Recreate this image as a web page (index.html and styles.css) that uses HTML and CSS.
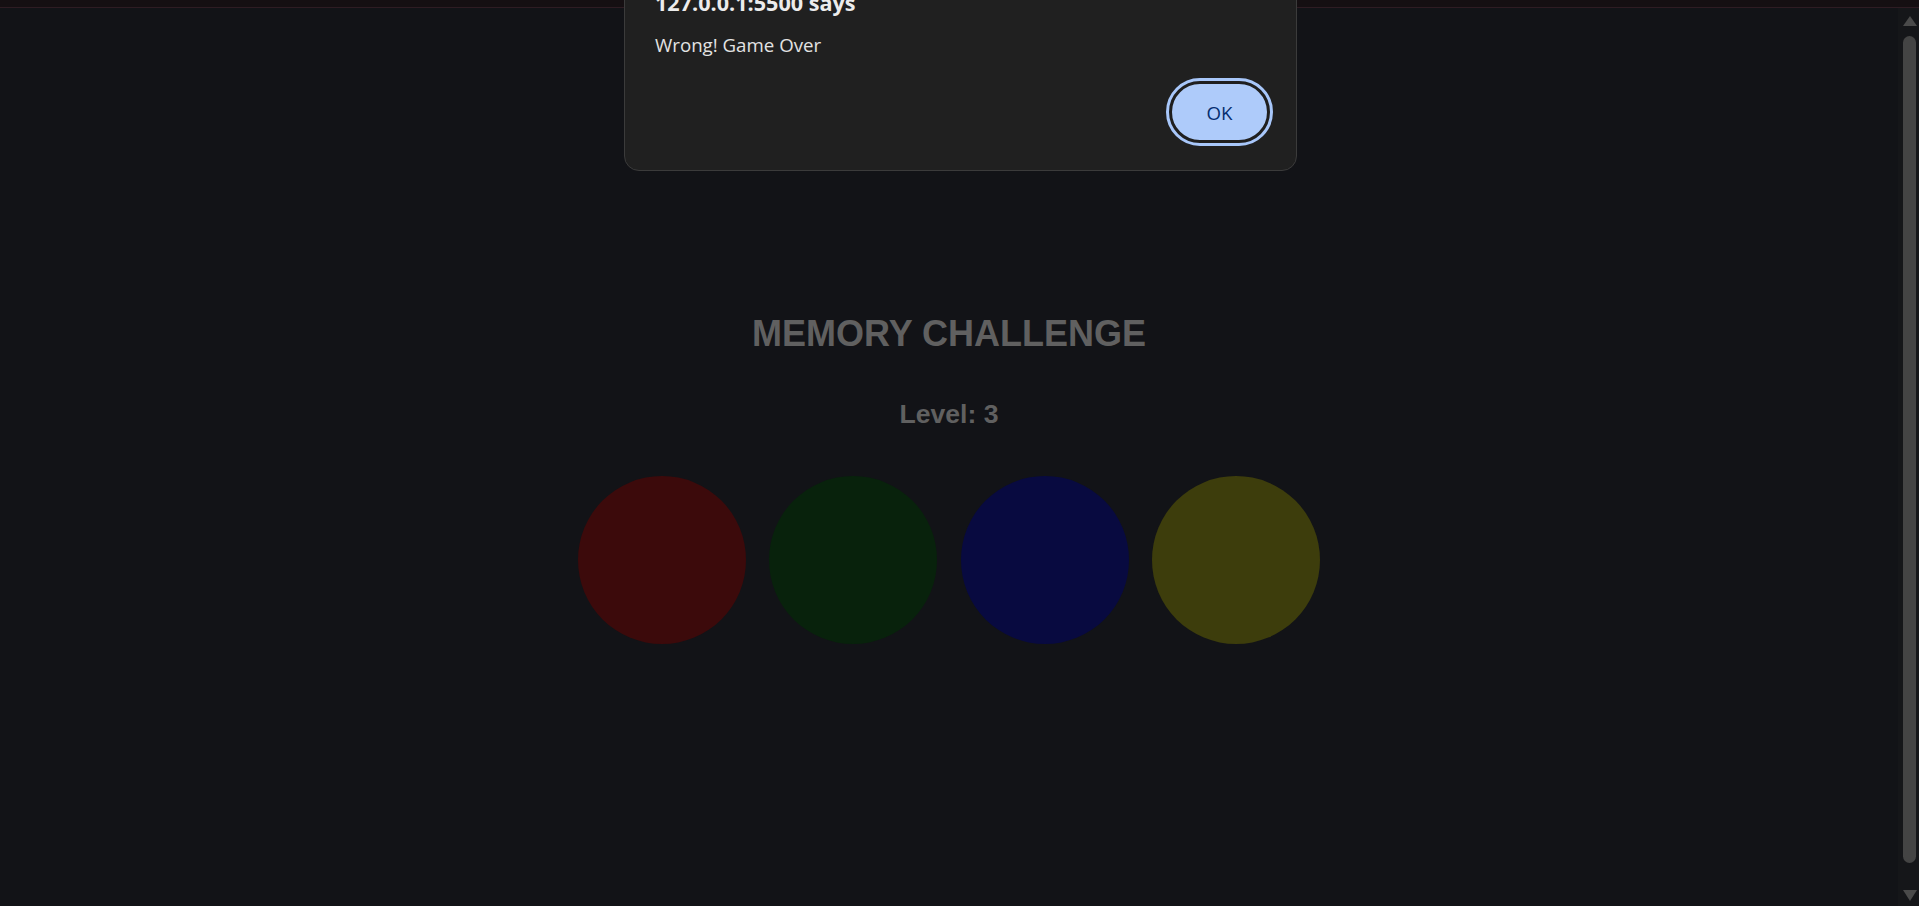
FILE: index.html
```html
<!DOCTYPE html>
<html lang="en">
<head>
<meta charset="utf-8">
<title>Memory Challenge</title>
<link rel="stylesheet" href="styles.css">
</head>
<body>
<div class="topbar"></div>
<div class="viewport">
  <main class="game">
    <h1 class="title">MEMORY CHALLENGE</h1>
    <h2 class="level">Level: 3</h2>
    <div class="pads">
      <div class="pad pad-red"></div>
      <div class="pad pad-green"></div>
      <div class="pad pad-blue"></div>
      <div class="pad pad-yellow"></div>
    </div>
  </main>
  <div class="scrollbar">
    <div class="arrow-up"></div>
    <div class="thumb"></div>
    <div class="arrow-down"></div>
  </div>
</div>
<div class="dialog" role="alertdialog">
  <div class="dialog-title">127.0.0.1:5500 says</div>
  <div class="dialog-message">Wrong! Game Over</div>
  <div class="dialog-actions">
    <button class="dialog-ok">OK</button>
  </div>
</div>
</body>
</html>
```
FILE: styles.css
```css
html, body {
  margin: 0;
  padding: 0;
}
body {
  width: 1919px;
  height: 906px;
  overflow: hidden;
  background: #121317;
  font-family: "Liberation Sans", Arial, sans-serif;
  position: relative;
}
.topbar {
  height: 7px;
  background: #150f12;
  border-bottom: 1px solid #2e1c23;
}
.viewport {
  display: flex;
  height: 898px;
}
.game {
  flex: 1;
  display: flex;
  flex-direction: column;
  align-items: center;
  padding-top: 306px;
}
.title {
  margin: 0;
  font-size: 36px;
  line-height: 40px;
  font-weight: 700;
  color: #606060;
}
.level {
  margin: 45px 0 0;
  font-size: 26.6px;
  line-height: 30px;
  font-weight: 700;
  color: #606060;
}
.pads {
  display: flex;
  gap: 23.6px;
  margin-top: 47px;
}
.pad {
  width: 168px;
  height: 168px;
  border-radius: 50%;
}
.pad-red { background: #3c0a0b; }
.pad-green { background: #08220c; }
.pad-blue { background: #080a40; }
.pad-yellow { background: #3d3d0c; }

.scrollbar {
  width: 21px;
  background: #151619;
  display: flex;
  flex-direction: column;
  align-items: center;
  padding: 8px 0 5px 2px;
  box-sizing: border-box;
}
.arrow-up {
  width: 0;
  height: 0;
  border-left: 7px solid transparent;
  border-right: 7px solid transparent;
  border-bottom: 10px solid #4a4a4a;
}
.thumb {
  flex: 1;
  width: 13px;
  margin: 10px 0 27px;
  background: #444444;
  border-radius: 7px;
}
.arrow-down {
  width: 0;
  height: 0;
  border-left: 7px solid transparent;
  border-right: 7px solid transparent;
  border-top: 11px solid #4a4a4a;
}

.dialog {
  position: absolute;
  left: 624px;
  top: -40px;
  width: 673px;
  box-sizing: border-box;
  background: #202020;
  border: 1px solid #3b3b3b;
  border-radius: 15px;
  padding: 28px 26px 27px 30px;
  font-family: "Open Sans", "Noto Sans", sans-serif;
  color: #e3e3e3;
}
.dialog-title {
  font-size: 21.6px;
  line-height: 27px;
  font-weight: 700;
  color: #ececec;
}
.dialog-message {
  margin-top: 17px;
  font-size: 18.7px;
  line-height: 24px;
}
.dialog-actions {
  display: flex;
  justify-content: flex-end;
  margin-top: 24px;
}
.dialog-ok {
  width: 101px;
  height: 62px;
  box-sizing: border-box;
  border: 3px solid #1f1f1f;
  outline: 3px solid #a8c7fa;
  outline-offset: 0;
  border-radius: 999px;
  background: #aecbfa;
  color: #062e6f;
  font-family: "Open Sans", "Noto Sans", sans-serif;
  font-size: 18.7px;
  font-weight: 500;
  padding: 0;
}
```
